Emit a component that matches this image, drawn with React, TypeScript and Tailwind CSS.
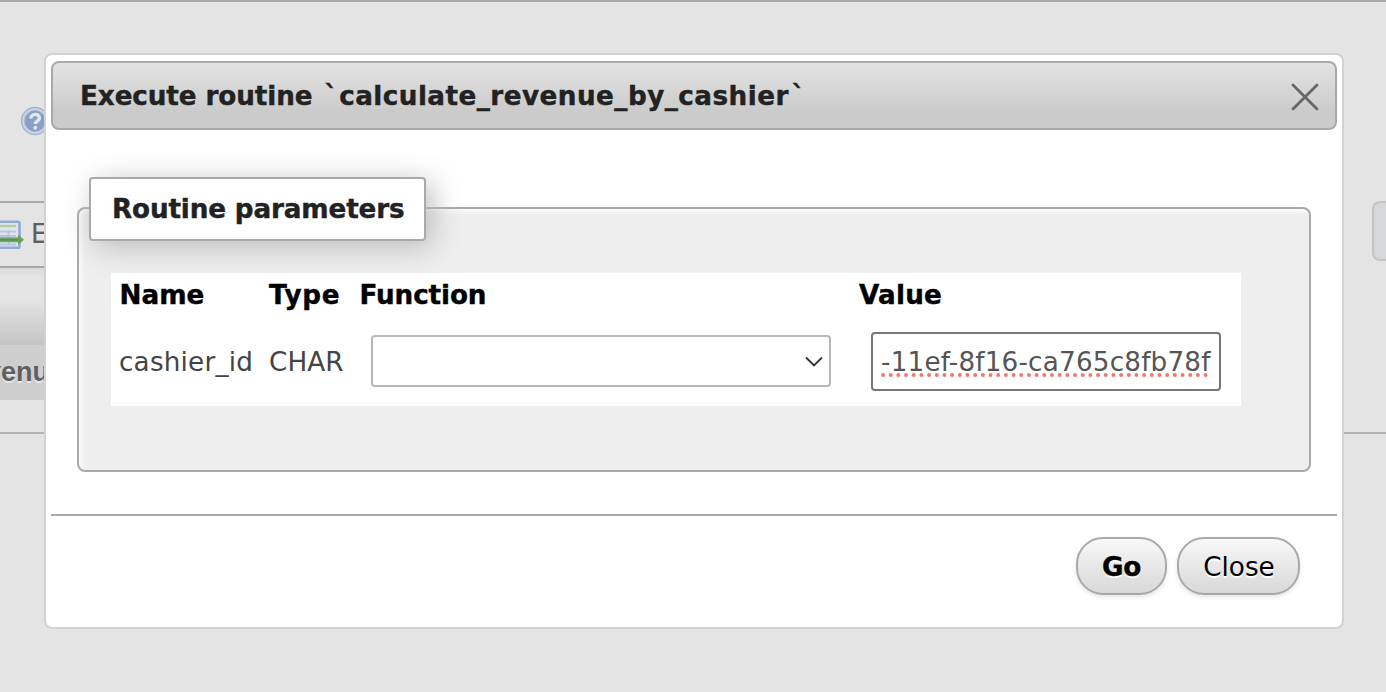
import React from "react";

function HelpIcon() {
  return (
    <svg className="block h-[30px] w-[30px]" viewBox="0 0 30 30">
      <circle cx="15" cy="15" r="13.400" fill="#b9c6d9" stroke="#a4b5cf" strokeWidth="1.600" />
      <circle cx="15" cy="15" r="12" fill="none" stroke="#cdd6e2" strokeWidth="1.400" />
      <circle cx="15" cy="15" r="10.400" fill="#87a0c6" />
      <path d="M10.800 12.600c0-5.600 8.600-5.600 8.600-.4 0 3-4 2.600-4 5.800" fill="none" stroke="#e2e7ee" strokeWidth="3.400" />
      <circle cx="15.300" cy="21.800" r="2" fill="#e2e7ee" />
    </svg>
  );
}

function ExportIcon() {
  return (
    <svg className="block h-[30px] w-6 shrink-0" viewBox="0 0 24 30">
      <rect x="-8" y="1.800" width="27.500" height="26" rx="1.500" fill="#dfe5ee" stroke="#92a9d6" strokeWidth="2.600" />
      <path d="M0 6h16" stroke="#b0d0a0" strokeWidth="2.400" />
      <path d="M0 11.500h16M0 16h16M0 24.500h16M8.500 10v15" stroke="#b7c6de" strokeWidth="1.800" />
      <path d="M0 19.800h19" stroke="#77a86c" strokeWidth="5" />
      <path d="M0 19.800h19" stroke="#579350" strokeWidth="2" />
      <path d="M18 14.600l6 5.200-6 5.200z" fill="#6ba05f" />
    </svg>
  );
}

function Backdrop() {
  return (
    <div className="flex h-full flex-col border-t-2 border-[#a8a8a8] text-[#5f5f5f]">
      <div className="h-[199px] pl-5 pt-[104px]">
        <HelpIcon />
      </div>
      <div className="flex h-[67px] items-start justify-between">
        <div className="flex h-[67px] w-[60px] items-center gap-[7px] overflow-hidden border-y-2 border-[#a8a8a8] text-[26px]">
          <ExportIcon />
          <span className="pb-[2px] [-webkit-text-stroke:0.2px]">Export</span>
        </div>
        <div className="h-[60px] w-3.5 rounded-l-lg border-2 border-r-0 border-[#c0c3c7] bg-[#d5d7d9]" />
      </div>
      <div className="h-[77px] w-[60px] bg-[linear-gradient(#dadada_0,#e4e4e4_8px,#e4e4e4_32px,#c4c4c4_77px)]" />
      <div className="flex h-[55px] w-[60px] items-center justify-end overflow-hidden bg-[#cecece] pb-px pr-[11px] font-['Liberation_Sans',sans-serif] text-[27px] font-bold [text-shadow:0_2px_0_#e8e8e8]">
        revenu
      </div>
      <div className="mt-8 h-0.5 bg-[#b2b2b2]" />
    </div>
  );
}

function ParameterTable() {
  return (
    <table className="ml-8 h-[133px] w-[1130px] table-fixed border-collapse bg-white text-left">
      <colgroup>
        <col className="w-[149px]" />
        <col className="w-[91px]" />
        <col className="w-[499px]" />
        <col className="w-[391px]" />
      </colgroup>
      <thead>
        <tr className="h-11 whitespace-nowrap font-bold text-black [-webkit-text-stroke:0.4px]">
          <th className="p-0 pl-[8.500px]">Name</th>
          <th className="p-0 pl-[9px] tracking-[0.7px]">Type</th>
          <th className="p-0 pl-[8.500px] tracking-[-0.1px]">Function</th>
          <th className="p-0 pl-[9px] tracking-[0.2px]">Value</th>
        </tr>
      </thead>
      <tbody>
        <tr className="h-[89px] whitespace-nowrap">
          <td className="p-0 pl-2 tracking-[0.2px]">cashier_id</td>
          <td className="p-0 pl-[9px] tracking-[0.1px]">CHAR</td>
          <td className="p-0 pb-0.5 pl-5">
            <div className="flex h-[52px] w-[460px] items-center justify-end rounded border-2 border-[#b8b8b8] bg-white pr-1.5">
              <svg className="mt-0.5 h-3 w-[18px]" viewBox="0 0 18 12" fill="none" stroke="#333" strokeWidth="1.800">
                <path d="M1 1.500l8 8 8-8" />
              </svg>
            </div>
          </td>
          <td className="p-0 pl-[21px]">
            <div className="flex h-[59px] w-[350px] items-center rounded border-2 border-[#777] bg-white pl-2 text-[#555]">
              <span className="relative tracking-[0.190px]">
                -11ef-8f16-ca765c8fb78f
                <svg className="absolute left-0 top-[27px] h-1 w-[332px]" viewBox="0 0 332 4">
                  <path d="M2 2h328" stroke="#f0796f" strokeWidth="4" strokeLinecap="round" strokeDasharray="0 7.680" />
                </svg>
              </span>
            </div>
          </td>
        </tr>
      </tbody>
    </table>
  );
}

function Dialog() {
  return (
    <div className="absolute left-11 top-[53px] flex h-[576px] w-[1300px] flex-col rounded-lg border-2 border-[#d2d2d2] bg-white px-[5px] pt-1.5">
      <div className="flex h-[69px] shrink-0 items-center justify-between rounded-lg border-2 border-[#a9a9a9] bg-[linear-gradient(#e3e3e3,#cbcbcb_75%,#cbcbcb)] pl-[27px] pr-4 font-bold text-[#222]">
        <span className="whitespace-nowrap [-webkit-text-stroke:0.4px]">
          <span className="tracking-[-0.1px]">Execute routine </span>
          <span className="pl-[3px] tracking-[1.500px]">`</span>
          <span className="tracking-[0.460px]">calculate_revenue_by_cashier</span>
          <span className="pl-[3px]">`</span>
        </span>
        <svg className="mt-0.5 h-7 w-7" viewBox="0 0 28 28" stroke="#666" strokeWidth="2.800" strokeLinecap="round">
          <path d="M2 2l24 24M26 2L2 26" />
        </svg>
      </div>
      <div className="h-[386px] shrink-0 border-b-2 border-[#a9a9a9] px-[26px] pt-[77px]">
        <div className="h-[265px] rounded-lg border-2 border-[#a9a9a9] bg-[#eee] shadow-[inset_3px_3px_6px_-1px_white]">
          <div className="relative z-0 -mt-8 ml-2.5 flex h-16 w-[337px] items-center rounded border-2 border-[#a9a9a9] bg-white pl-[21px] font-bold tracking-[-0.150px] text-[#222] shadow-[6px_6px_30px_#bbb] [-webkit-text-stroke:0.4px]">
            Routine parameters
          </div>
          <div className="relative mt-8">
            <ParameterTable />
          </div>
        </div>
      </div>
      <div className="flex justify-end gap-2.5 pr-[37px] pt-[21px] text-black [text-shadow:0_2px_0_white]">
        <button className="h-[58px] w-[91px] rounded-[27px] border-2 border-[#a9a9a9] bg-linear-to-b from-[#f8f8f8] to-[#d8d8d8] pb-0 pt-px font-bold tracking-[-0.3px] shadow-[0_2px_4px_#e4e4e4] [-webkit-text-stroke:0.4px] [text-shadow:inherit]">Go</button>
        <button className="h-[58px] w-[123px] rounded-[27px] border-2 border-[#a9a9a9] bg-linear-to-b from-[#f8f8f8] to-[#d8d8d8] pb-0 pl-px pt-px shadow-[0_2px_4px_#e4e4e4] [text-shadow:inherit]">Close</button>
      </div>
    </div>
  );
}

export default function App() {
  return (
    <div className="relative h-[692px] w-[1386px] overflow-hidden bg-[#e4e4e4] font-['DejaVu_Sans',sans-serif] text-[26.240px] leading-8 text-[#444]">
      <Backdrop />
      <Dialog />
    </div>
  );
}
